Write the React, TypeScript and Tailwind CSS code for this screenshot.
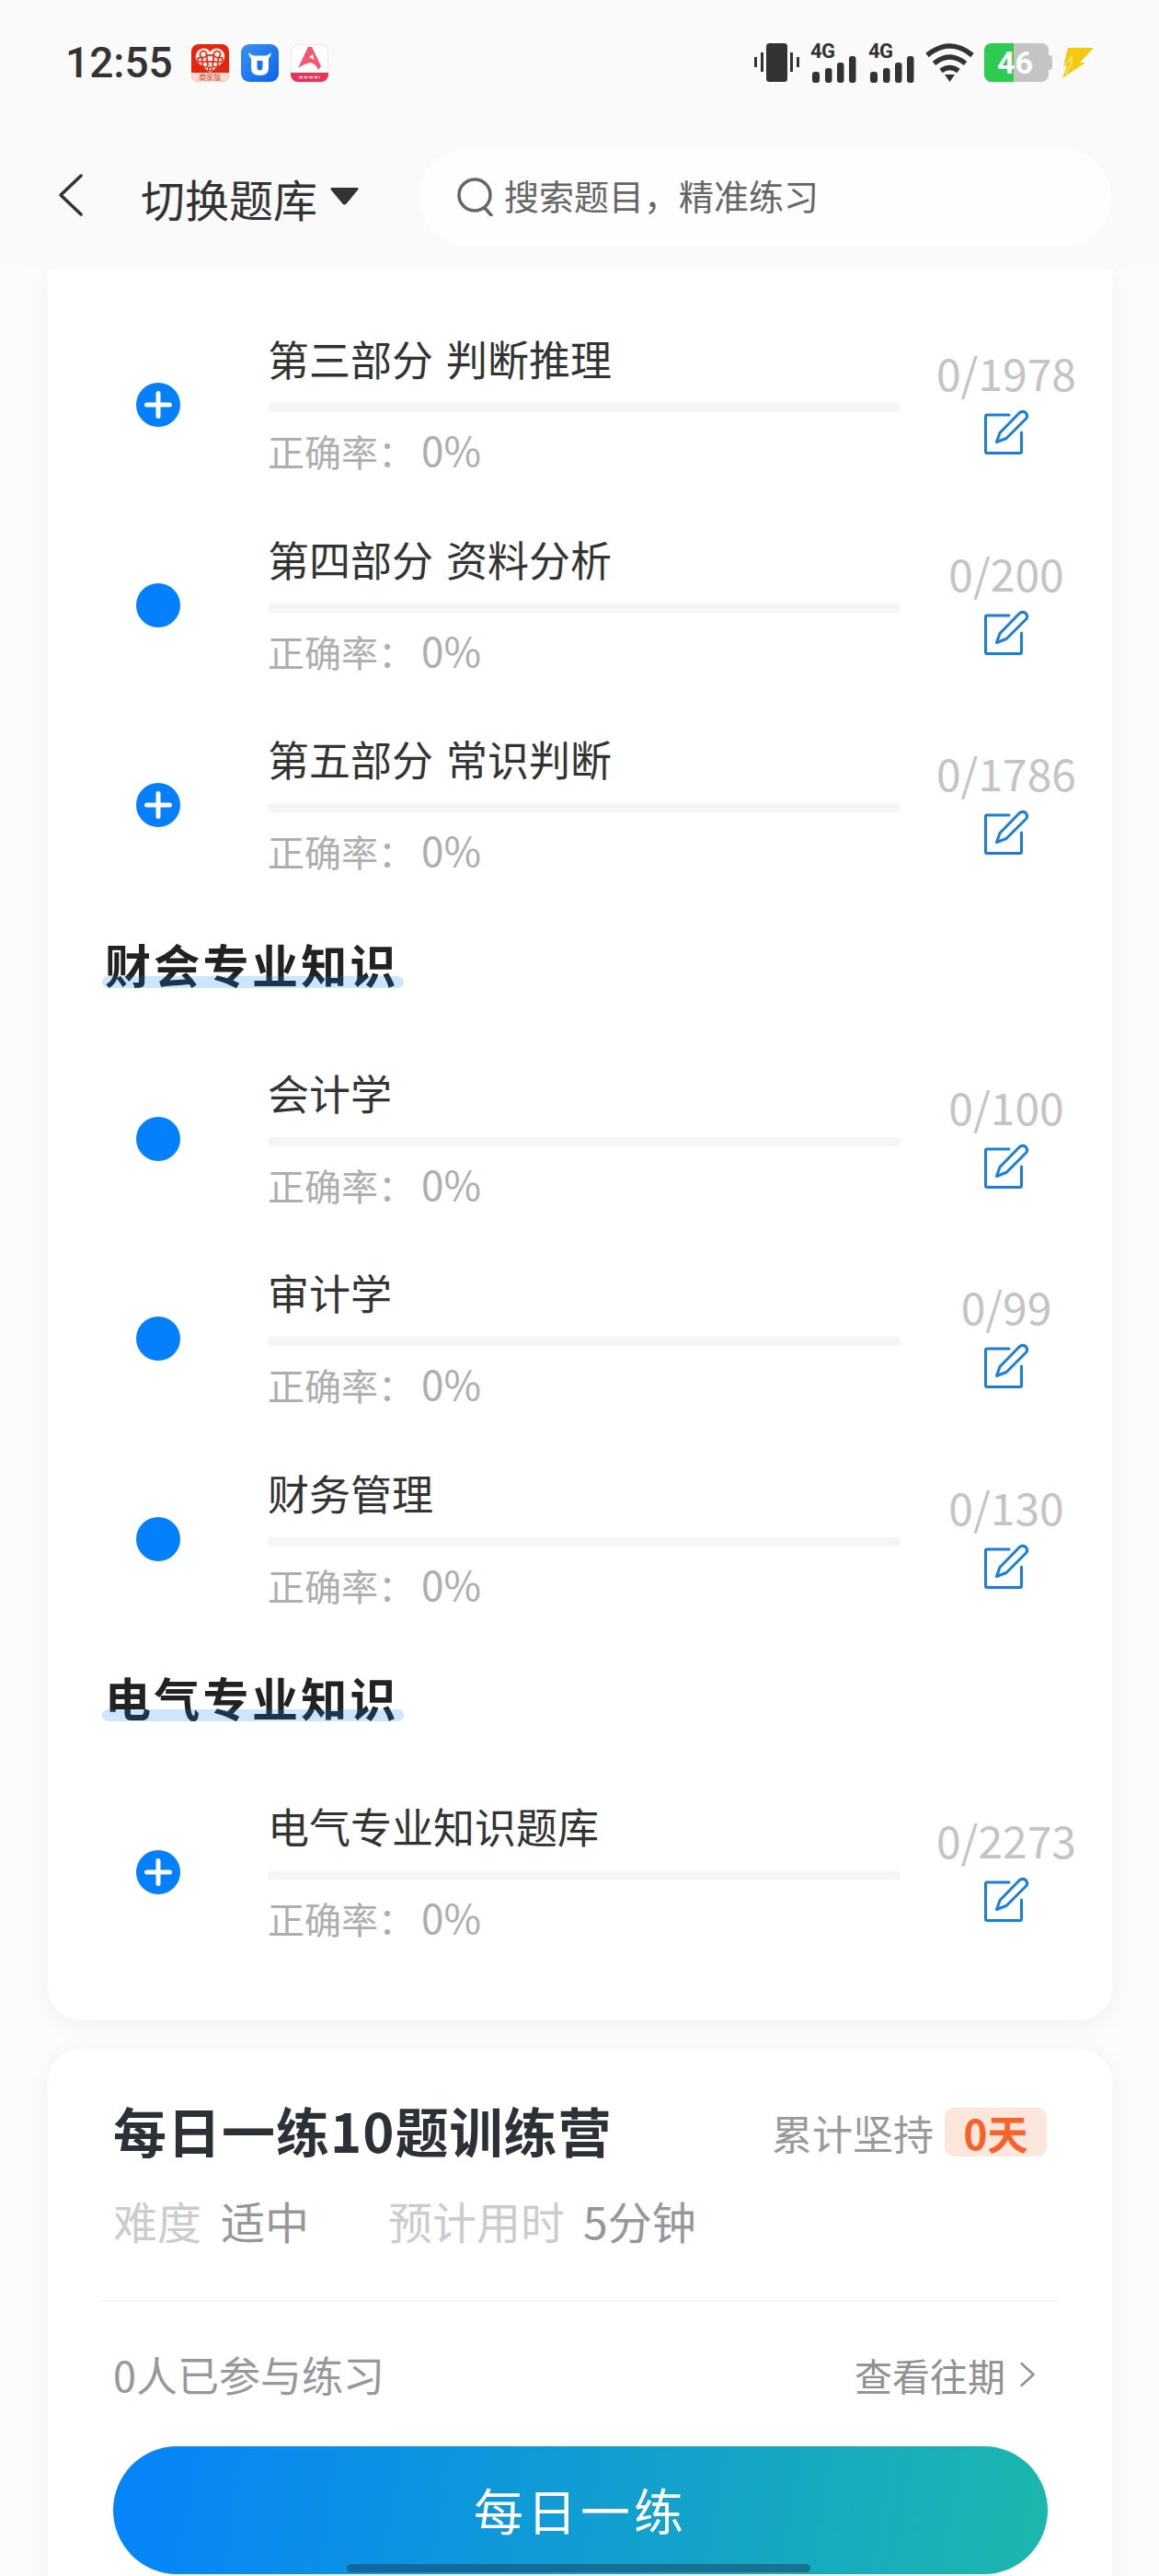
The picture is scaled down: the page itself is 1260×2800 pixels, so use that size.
import React from 'react';

const cjk = "font-['Noto_Sans_CJK_SC','Noto_Sans',sans-serif]";

const EditIcon: React.FC = () => (
  <svg width="49" height="49" viewBox="0 0 49 49" fill="none" stroke="#1a7fdc" strokeWidth="3" strokeLinejoin="round" strokeLinecap="round">
    <path d="M27 6 H3 a1.5 1.5 0 0 0 -1.5 1.5 V46 a1.5 1.5 0 0 0 1.5 1.5 H39 a1.5 1.5 0 0 0 1.5 -1.5 V25" />
    <path d="M13.5 35.5 L17 25.5 L38 4 Q41.5 1 45 3.5 Q48 7 45.5 10 L24 31.5 Z" />
  </svg>
);

const Row: React.FC<{ title: string; count: string; plus?: boolean }> = ({ title, count, plus }) => (
  <div className="flex h-[217.5px] pl-[96px]">
    <div className="relative mt-[82px] h-[48px] w-[48px] shrink-0 rounded-full bg-[#0580fc]">
      {plus && (
        <svg className="absolute inset-0" width="48" height="48" viewBox="0 0 48 48" stroke="#fff" strokeWidth="5" strokeLinecap="round">
          <path d="M11.5 24 H36.5 M24 11.5 V36.5" />
        </svg>
      )}
    </div>
    <div className="ml-[95px] w-[688px] shrink-0 pt-[26px]">
      <div className="h-[60px] text-[45px] leading-[60px] text-[#333] [word-spacing:4px]">{title}</div>
      <div className="mt-[18px] h-[10px] rounded-full bg-[#f5f5f5]" />
      <div className="mt-[15px] h-[50px] text-[40px] leading-[50px] text-[#aeaeae]">
        正确率：<span className="ml-[7px] text-[44px]">0%</span>
      </div>
    </div>
    <div className="flex flex-1 flex-col items-center pt-[42px]">
      <div className="h-[56px] text-[48px] leading-[56px] text-[#c4c4c4]">{count}</div>
      <div className="mt-[13px]">
        <EditIcon />
      </div>
    </div>
  </div>
);

const Section: React.FC<{ title: string }> = ({ title }) => (
  <div className="h-[145px] pl-[62px] pt-[30px]">
    <div className="relative inline-block text-[50px] font-bold leading-[60px] tracking-[3.3px] text-[#222]">
      {title}
      <div className="absolute -left-[3px] -right-[5px] top-[44px] h-[13px] rounded-full bg-[#0580fc]/20" />
    </div>
  </div>
);

const Signal: React.FC<{ className?: string }> = ({ className }) => (
  <div className={`relative h-[43px] w-[49px] ${className ?? ''}`}>
    <span className="absolute left-0 top-0 font-['Roboto',sans-serif] text-[22px] font-bold leading-[18px] tracking-[-0.5px] text-[#333]">4G</span>
    <svg className="absolute left-0 top-0" width="50" height="43" viewBox="0 0 50 43" fill="#333">
      <rect x="2" y="31" width="8" height="12" rx="3" />
      <rect x="16" y="27" width="7.500" height="16" rx="3" />
      <rect x="29" y="21" width="7.500" height="22" rx="3" />
      <rect x="42" y="14" width="7.500" height="29" rx="3" />
    </svg>
  </div>
);

const StatusBar: React.FC = () => (
  <div className="flex h-[137px] items-start justify-between pl-[71px] pr-[70px] pt-[47px]">
    <div className="flex items-center">
      <span className="font-['Roboto',sans-serif] text-[46px] font-medium leading-[42px] text-[#333]">12:55</span>
      <div className="ml-[20px] flex gap-[13px]">
        <div className="relative h-[41px] w-[41px] overflow-hidden rounded-[8px] bg-[#e5260f]">
          <svg className="absolute left-0 top-0" width="41" height="41" viewBox="0 0 41 41">
            <path d="M20.500 31 L7 20 C2 13 6 5 13 4.500 C16.500 4.500 19 6 20.500 8.500 C22 6 24.500 4.500 28 4.500 C35 5 39 13 34 20 Z" fill="#fff" opacity=".92" />
            <g fill="none" stroke="#e5260f" strokeWidth="1.600">
              <circle cx="13" cy="11" r="3.500" />
              <circle cx="28" cy="11" r="3.500" />
              <circle cx="9.500" cy="17" r="2.500" />
              <circle cx="31.500" cy="17" r="2.500" />
              <circle cx="15" cy="22" r="3" />
              <circle cx="26" cy="22" r="3" />
              <circle cx="20.500" cy="27" r="2" />
              <rect x="17" y="12" width="7" height="7" />
            </g>
          </svg>
          <div className="absolute inset-x-0 bottom-0 h-[10px] bg-[#fbd9cf] text-center text-[8px] leading-[10px] text-[#c9452e]">商家版</div>
        </div>
        <svg width="41" height="41" viewBox="0 0 41 41">
          <defs>
            <linearGradient id="blueApp" x1="0" y1="0" x2="1" y2="1">
              <stop offset="0" stopColor="#3a92ef" />
              <stop offset="1" stopColor="#0b63ee" />
            </linearGradient>
          </defs>
          <rect width="41" height="41" rx="9" fill="url(#blueApp)" />
          <path d="M8 9 Q9 14 11 15.500 L11 26 Q11 34 20.500 34 Q30 34 30 26 L30 15.500 Q32 14 33 9 Q29 12.500 26 12.500 H15 Q12 12.500 8 9 Z" fill="#fff" />
          <path d="M17.500 18 H23.500 V25 Q23.500 28.500 20.500 28.500 Q17.500 28.500 17.500 25 Z" fill="#1a75ef" />
        </svg>
        <svg width="41" height="41" viewBox="0 0 41 41">
          <rect x=".5" y=".5" width="40" height="40" rx="8" fill="#fff" stroke="#e8e8e8" />
          <path d="M0 31 H41 V33 a8 8 0 0 1 -8 8 H8 a8 8 0 0 1 -8 -8 Z" fill="#ee2f57" />
          <path d="M8 26 L19 3 H23 L33 24 L30 28 Q27 21 22 20 Q15 21 8 26 Z" fill="#f8566f" />
          <path d="M20 14 L24 11 L25.500 17 Z" fill="#fff" />
          <path d="M9 36 H32" stroke="#ffc9d2" strokeWidth="2.500" strokeDasharray="4 1.500" />
        </svg>
      </div>
    </div>
    <div className="flex items-start">
      <svg width="49" height="42" viewBox="0 0 49 42" fill="#333">
        <rect x="13" y="0" width="23" height="42" rx="3.500" />
        <rect x="7" y="10" width="3" height="21" />
        <rect x="0" y="15" width="3" height="11" />
        <rect x="39" y="10" width="3" height="21" />
        <rect x="46" y="15" width="3" height="11" />
      </svg>
      <Signal className="ml-[12px]" />
      <Signal className="ml-[14px]" />
      <svg className="ml-[13px]" width="53" height="42" viewBox="0 0 53 42" fill="none" stroke="#333" strokeWidth="5.500">
        <path d="M2 13 Q26.500 -7 51 13" />
        <path d="M9.500 22 Q26.500 8 43.500 22" />
        <path d="M17 30 Q26.500 23 36 30" />
        <path d="M21 34 H32 L26.500 42 Z" fill="#333" stroke="none" />
      </svg>
      <div className="relative ml-[11px] h-[42px] w-[74px]">
        <div className="absolute inset-y-0 left-0 w-[70px] overflow-hidden rounded-[8px] bg-[#c4c4c4]">
          <div className="h-full w-[32px] bg-[#2dcc50]" />
        </div>
        <div className="absolute right-0 top-[13px] h-[16px] w-[4px] rounded-r-[3px] bg-[#c4c4c4]" />
        <div className="absolute left-[14px] top-0 font-['Roboto',sans-serif] text-[34px] font-bold leading-[42px] text-white">46</div>
      </div>
      <svg className="ml-[10px] mt-[4px]" width="36" height="34" viewBox="0 0 36 34" fill="#f6c90e">
        <path d="M7 1 H35 L20 17 H26 L1 34 L6 21 H2 Z" />
        <path d="M3 20 L11 11 L11 17 L5 30" stroke="#fbe58a" strokeWidth="1.500" fill="none" />
      </svg>
    </div>
  </div>
);

const NavBar: React.FC = () => (
  <div className="flex h-[156px] items-start pl-[64px] pr-[52px] pt-[24px]">
    <svg className="mt-[28px]" width="26" height="46" viewBox="0 0 26 46" fill="none" stroke="#333" strokeWidth="3.500" strokeLinecap="round" strokeLinejoin="round">
      <path d="M24 2 L2 23 L24 44" />
    </svg>
    <span className="ml-[63px] mt-[24px] h-[60px] text-[48px] leading-[60px] text-[#333]">切换题库</span>
    <svg className="ml-[14px] mt-[43px]" width="31" height="19" viewBox="0 0 31 19" fill="#333">
      <path d="M2 0 H29 Q31.500 0 30 2.500 L17.500 17.500 Q15.500 19.500 13.500 17.500 L1 2.500 Q-.5 0 2 0 Z" />
    </svg>
    <div className="ml-[66px] flex h-[106px] flex-1 items-center rounded-full bg-[#fefefe] pl-[41px]">
      <svg width="40" height="42" viewBox="0 0 40 42" fill="none" stroke="#666" strokeWidth="3.500" strokeLinecap="round">
        <circle cx="19" cy="19" r="17" />
        <path d="M30 33 L37 41" />
      </svg>
      <span className="ml-[11px] -mt-[6px] text-[38px] text-[#666]">搜索题目，精准练习</span>
    </div>
  </div>
);

const App: React.FC = () => {
  return (
    <div className={`relative flex h-[2800px] w-[1260px] flex-col overflow-hidden bg-white ${cjk}`}>
      <header className="relative z-10 h-[293px] shrink-0 bg-[#fafafa]">
        <StatusBar />
        <NavBar />
      </header>

      <main className="flex-1 bg-[#fcfcfc] px-[52px]">
        <div className="w-[1157px] rounded-b-[36px] bg-white pb-[49px] pt-[41px] shadow-[0_4px_30px_rgba(0,0,0,0.05)]">
          <Row title="第三部分 判断推理" count="0/1978" plus />
          <Row title="第四部分 资料分析" count="0/200" />
          <Row title="第五部分 常识判断" count="0/1786" plus />
          <Section title="财会专业知识" />
          <Row title="会计学" count="0/100" />
          <Row title="审计学" count="0/99" />
          <Row title="财务管理" count="0/130" />
          <Section title="电气专业知识" />
          <Row title="电气专业知识题库" count="0/2273" plus />
        </div>

        <div className="mt-[31px] h-[700px] w-[1157px] rounded-t-[36px] bg-white px-[71px] shadow-[0_4px_30px_rgba(0,0,0,0.05)]">
          <div className="flex items-center justify-between pt-[50px]">
            <h2 className="text-[58px] font-bold leading-[76px] tracking-[1px] text-[#2c3137]">每日一练10题训练营</h2>
            <div className="flex items-center pt-[6px]">
              <span className="text-[44px] leading-[56px] text-[#999]">累计坚持</span>
              <span className="ml-[12px] flex h-[53px] w-[111px] items-center justify-center rounded-[10px] bg-[#fde6dc] text-[44px] font-bold text-[#f96126]">0天</span>
            </div>
          </div>
          <div className="mt-[30px] flex text-[48px] leading-[60px]">
            <span className="text-[#ccc]">难度</span>
            <span className="ml-[21px] text-[#96969b]">适中</span>
            <span className="ml-[86px] text-[#ccc]">预计用时</span>
            <span className="ml-[20px] text-[#96969b]">5分钟</span>
          </div>
          <div className="-mx-[15px] mt-[57px] h-[2px] bg-[#f8f8f8]" />
          <div className="mt-[49px] flex items-center justify-between">
            <span className="text-[45px] leading-[60px] text-[#97979c]">0人已参与练习</span>
            <div className="flex items-center pr-[13px]">
              <span className="text-[41px] leading-[60px] text-[#909095]">查看往期</span>
              <svg className="ml-[16px]" width="16" height="28" viewBox="0 0 16 28" fill="none" stroke="#909095" strokeWidth="2.500" strokeLinecap="round" strokeLinejoin="round">
                <path d="M1.500 2 L14.500 14 L1.500 26" />
              </svg>
            </div>
          </div>
          <button className="mt-[48px] flex h-[139px] w-[1016px] items-center justify-center rounded-full bg-[linear-gradient(100deg,#0583fb,#1cb7ac)] pb-[2px] text-[54px] tracking-[4px] text-white">
            每日一练
          </button>
        </div>
      </main>

      <div className="absolute left-[377px] top-[2787px] h-[9px] w-[504px] rounded-full bg-[#1e3c5a]/50" />
    </div>
  );
};

export default App;
